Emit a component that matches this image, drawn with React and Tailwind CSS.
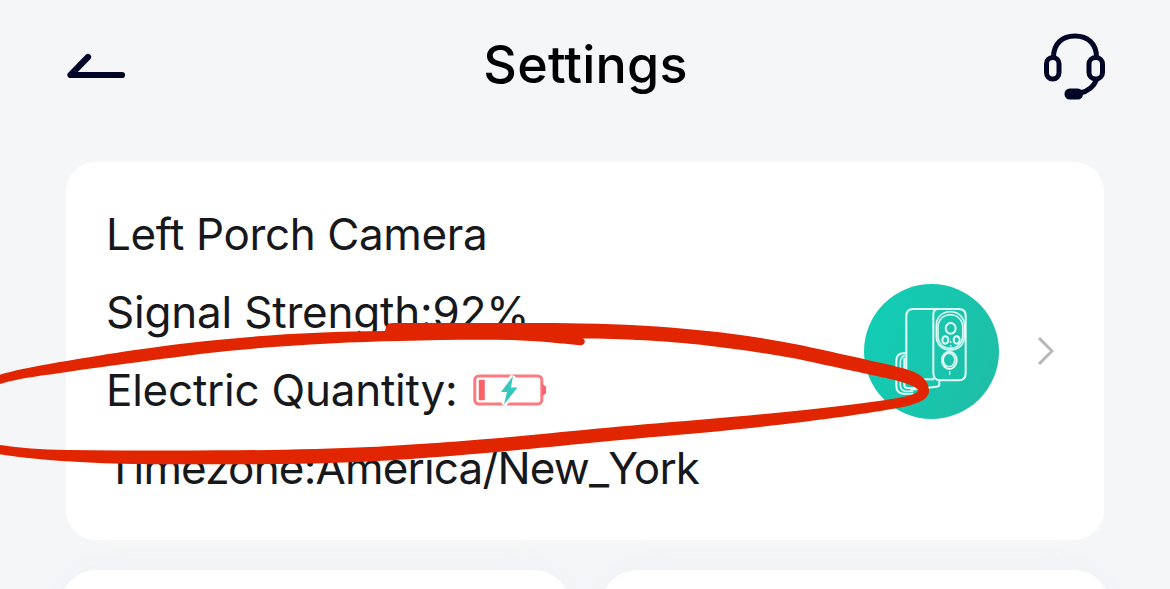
const rows = [
  { label: 'Left Porch Camera', spacing: 'tracking-[-0.4px]' },
  { label: 'Signal Strength:92%', spacing: 'tracking-[-0.2px]' },
  { label: 'Electric Quantity:', spacing: 'tracking-[-0.24px]', battery: true },
  { label: 'Timezone:America/New_York', spacing: 'tracking-[-0.83px]' },
];

function BackIcon() {
  return (
    <svg className="h-[30px] w-[60px]" viewBox="0 0 60 30" fill="none" stroke="#020626" strokeWidth="6.2" strokeLinecap="round" strokeLinejoin="round">
      <path d="M22 6L4.5 24H56" />
    </svg>
  );
}

function HeadsetIcon() {
  return (
    <svg className="h-[70px] w-[64px]" viewBox="0 0 64 70" fill="none" stroke="#020626" strokeWidth="5">
      <path d="M10.5 26C10.5 13 19 5 32 5S53.5 13 53.5 26" />
      <rect x="3.5" y="26.5" width="12.5" height="21.5" rx="6.2" />
      <rect x="46" y="26.5" width="13.5" height="21.5" rx="6.5" />
      <path d="M54 48C51 55 45 60.5 37 62" />
      <rect x="21.5" y="57.5" width="18.5" height="11" rx="5.2" fill="#020626" stroke="none" />
    </svg>
  );
}

function BatteryIcon() {
  return (
    <svg className="h-[34px] w-[74px]" viewBox="0 0 74 34">
      <rect x="1.8" y="3" width="67" height="28" rx="4" fill="none" stroke="#fb7a80" strokeWidth="3" />
      <path d="M70 12.5l2.2 1.5v6l-2.2 1.5z" fill="#fa6268" stroke="#fa6268" strokeWidth="1.5" />
      <rect x="5.8" y="6.8" width="6" height="20.5" rx="0.8" fill="#fa6268" />
      <path d="M40 3L28 19h6L31 31.5 44.5 14.5h-6.5z" fill="#35c9bd" stroke="#fff" strokeWidth="5" paintOrder="stroke" />
    </svg>
  );
}

function CameraIcon() {
  return (
    <svg className="size-[135px]" viewBox="42 41 405 405" fill="none" stroke="#e4fffa" strokeWidth="6">
      <defs>
        <linearGradient id="teal" x1="0" y1="0.3" x2="1" y2="0.7">
          <stop offset="0" stopColor="#12cdb5" />
          <stop offset="1" stopColor="#1fbea6" />
        </linearGradient>
      </defs>
      <circle cx="244.5" cy="243.5" r="202.5" fill="url(#teal)" stroke="none" />
      <path d="M169 327V137Q169 116 190 116H326Q347 116 347 137V308Q347 330 326 330H272Q250 330 250 308V132Q250 116 266 116" />
      <path d="M169 327H252" />
      <rect x="259" y="124" width="84" height="115" rx="40" strokeWidth="4.5" />
      <rect x="264" y="133" width="74" height="101" rx="36" strokeWidth="4.5" />
      <ellipse cx="302" cy="174" rx="15" ry="16" />
      <ellipse cx="286" cy="209" rx="9" ry="11" />
      <ellipse cx="320" cy="209" rx="9" ry="11" />
      <ellipse cx="298" cy="270" rx="22" ry="26" />
      <ellipse cx="297" cy="269" rx="17" ry="20" strokeWidth="4" />
      <path d="M302 212v6M302 224v6M299 303v10" strokeWidth="4" />
      <path d="M169 249H160Q139 249 139 272V347Q139 370 161 370H190" />
      <path d="M169 255Q151 257 151 276V344Q151 362 168 363H190" strokeWidth="4.5" />
      <path d="M163 262V344Q163 353 172 353H232M268 331V342Q268 349 260 349L180 358" />
    </svg>
  );
}

// hand-drawn marker loop around the battery row: outer edge, then the hole inside it
function MarkerLoop() {
  return (
    <svg className="pointer-events-none absolute inset-0 h-[589px] w-[1170px]" viewBox="0 0 1170 589">
      <path
        fill="#e12500"
        fillRule="evenodd"
        d="M-12 379L0 374.8C22 367.5 90 357 133 350.3C200 340 290 331.5 385 331L386 327Q387 323 393 323H480
          C540 323 590 322.5 640 325.5C700 329 750 335 800 345C830 351.5 880 362.5 900 367.5
          C918 371.5 929 379 929 391C929 401 912 405.5 895 408.5C850 416.5 780 425.5 700 433
          C600 441.5 540 448 503 451.5C440 457 400 460 370 461.5C300 465 200 464.5 133 464
          C80 463 30 459.5 0 454.3L-12 452Z
          M-12 388L0 384C20 377.5 45 375.5 67 372C100 367 150 360.5 200 354C265 346.5 340 342 400 341
          C440 340 480 339.5 517 340.2C545 341 560 343.5 580 345.2Q584.5 345.3 584.8 341.8Q584.8 338.8 582 338.4
          C620 338.5 670 341 703 345C740 349.5 780 355.2 800 359.5C830 366 870 374.5 890 379
          C905 382.5 918 387 918 390.5C918 393.5 908 396 898 398C850 406 790 412 700 419.8
          C620 426 560 432.5 503 437.7C450 442 410 445 370 447C290 451 170 451 67 450C40 449.500 20 448 0 445L-12 443Z"
      />
    </svg>
  );
}

export default function App() {
  return (
    <main className="relative flex h-[589px] w-[1170px] flex-col overflow-hidden bg-[#f5f6f8] font-['Inter',sans-serif]">
      <header className="flex h-[162px] shrink-0 items-start justify-between pl-[66px] pr-[63px]">
        <button className="mt-[51px] flex w-[62px]" aria-label="Back">
          <BackIcon />
        </button>
        <h1 className="mt-[33px] text-[52px] font-medium leading-[64px] tracking-[0.2px] text-black">Settings</h1>
        <button className="mt-[31px]" aria-label="Support">
          <HeadsetIcon />
        </button>
      </header>

      <section className="mx-[66px] flex h-[378px] shrink-0 items-center rounded-[30px] bg-white pl-[40px] pr-[50px]">
        <div className="flex flex-1 flex-col">
          {rows.map((row) => (
            <div key={row.label} className="flex h-[78px] items-center">
              <span className={`whitespace-nowrap text-[44px] leading-[78px] text-[#17181c] ${row.spacing}`}>{row.label}</span>
              {row.battery && (
                <span className="ml-[15.5px]">
                  <BatteryIcon />
                </span>
              )}
            </div>
          ))}
        </div>
        <CameraIcon />
        <svg className="ml-[38px] h-[30px] w-[17px]" viewBox="0 0 17 30" fill="none" stroke="#b7b7b7" strokeWidth="3">
          <path d="M2 2L15 15L2 28" />
        </svg>
      </section>

      <div className="mx-[60px] mt-[30px] grid grid-cols-2 gap-[31px]">
        <div className="h-[180px] rounded-[36px] bg-white shadow-[0_0_30px_rgba(225,235,246,0.4)]" />
        <div className="h-[180px] rounded-[36px] bg-white shadow-[0_0_30px_rgba(225,235,246,0.4)]" />
      </div>

      <MarkerLoop />
    </main>
  );
}
